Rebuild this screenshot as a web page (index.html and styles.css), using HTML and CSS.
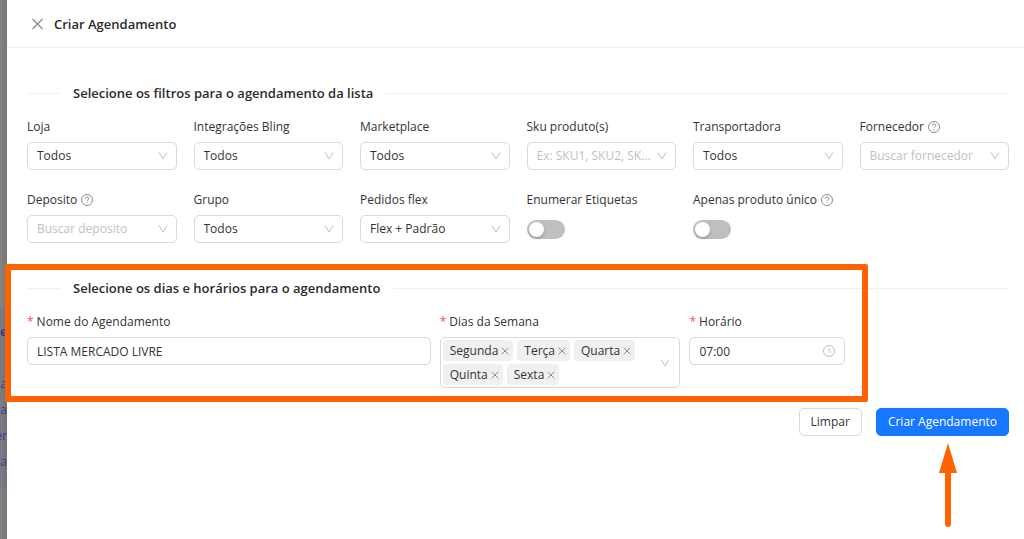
FILE: index.html
```
<!DOCTYPE html>
<html lang="pt-BR">
<head>
    <meta charset="UTF-8">
    <meta name="viewport" content="width=device-width, initial-scale=1.0">
    <title>Criar Agendamento</title>
    <link rel="stylesheet" href="styles.css">
</head>
<body>
    <!-- shared icons -->
    <svg class="sprite" aria-hidden="true">
        <symbol id="arrow" viewBox="0 0 10 10"><path d="M1 1.5 L5 8 L9 1.5" /></symbol>
        <symbol id="cross" viewBox="0 0 12 12"><path d="M1 1 L11 11 M11 1 L1 11" /></symbol>
        <symbol id="help" viewBox="0 0 14 14">
            <circle cx="7" cy="7" r="5.5" />
            <path d="M5.2 5.6 C5.2 3.3 8.8 3.3 8.8 5.6 C8.8 6.9 7 6.8 7 8.3 M7 9.3 V10.3" />
        </symbol>
        <symbol id="clock" viewBox="0 0 14 14"><circle cx="7" cy="7" r="5.5" /><path d="M7 3.8 V7.2 L9.2 8.8" /></symbol>
    </svg>

    <div class="page">
        <div class="mask">
            <div class="mask-menu">
                <b>e</b>
                <span>a</span>
                <span>a</span>
                <span>êr</span>
                <span>ca</span>
            </div>
        </div>

        <div class="drawer">
            <header class="drawer-header">
                <button class="close" type="button" aria-label="Fechar"><svg class="icon"><use href="#cross" /></svg></button>
                <h1 class="title">Criar Agendamento</h1>
            </header>

            <form class="drawer-body">
                <h2 class="divider">Selecione os filtros para o agendamento da lista</h2>
                <div class="filters">
                    <div class="field">
                        <label for="loja">Loja</label>
                        <div class="control">
                            <select id="loja"><option>Todos</option></select>
                            <svg class="icon arrow"><use href="#arrow" /></svg>
                        </div>
                    </div>
                    <div class="field">
                        <label for="bling">Integrações Bling</label>
                        <div class="control">
                            <select id="bling"><option>Todos</option></select>
                            <svg class="icon arrow"><use href="#arrow" /></svg>
                        </div>
                    </div>
                    <div class="field">
                        <label for="marketplace">Marketplace</label>
                        <div class="control">
                            <select id="marketplace"><option>Todos</option></select>
                            <svg class="icon arrow"><use href="#arrow" /></svg>
                        </div>
                    </div>
                    <div class="field">
                        <label for="sku">Sku produto(s)</label>
                        <div class="control">
                            <select id="sku" class="empty"><option>Ex: SKU1, SKU2, SKU3</option></select>
                            <svg class="icon arrow"><use href="#arrow" /></svg>
                        </div>
                    </div>
                    <div class="field">
                        <label for="transportadora">Transportadora</label>
                        <div class="control">
                            <select id="transportadora"><option>Todos</option></select>
                            <svg class="icon arrow"><use href="#arrow" /></svg>
                        </div>
                    </div>
                    <div class="field">
                        <label for="fornecedor">Fornecedor <svg class="icon help"><use href="#help" /></svg></label>
                        <div class="control">
                            <select id="fornecedor" class="empty"><option>Buscar fornecedor</option></select>
                            <svg class="icon arrow"><use href="#arrow" /></svg>
                        </div>
                    </div>
                    <div class="field">
                        <label for="deposito">Deposito <svg class="icon help"><use href="#help" /></svg></label>
                        <div class="control">
                            <select id="deposito" class="empty"><option>Buscar deposito</option></select>
                            <svg class="icon arrow"><use href="#arrow" /></svg>
                        </div>
                    </div>
                    <div class="field">
                        <label for="grupo">Grupo</label>
                        <div class="control">
                            <select id="grupo"><option>Todos</option></select>
                            <svg class="icon arrow"><use href="#arrow" /></svg>
                        </div>
                    </div>
                    <div class="field">
                        <label for="flex">Pedidos flex</label>
                        <div class="control">
                            <select id="flex"><option>Flex + Padrão</option></select>
                            <svg class="icon arrow"><use href="#arrow" /></svg>
                        </div>
                    </div>
                    <div class="field">
                        <label for="enumerar">Enumerar Etiquetas</label>
                        <input id="enumerar" class="switch" type="checkbox" role="switch">
                    </div>
                    <div class="field">
                        <label for="unico">Apenas produto único <svg class="icon help"><use href="#help" /></svg></label>
                        <input id="unico" class="switch" type="checkbox" role="switch">
                    </div>
                </div>

                <section class="schedule">
                    <h2 class="divider">Selecione os dias e horários para o agendamento</h2>
                    <div class="schedule-row">
                        <div class="field">
                            <label class="required" for="nome">Nome do Agendamento</label>
                            <input id="nome" class="text" type="text" value="LISTA MERCADO LIVRE">
                        </div>
                        <div class="field">
                            <label class="required" for="dias">Dias da Semana</label>
                            <div class="control tags">
                                <span class="tag">Segunda<button type="button" aria-label="Remover Segunda"><svg class="icon"><use href="#cross" /></svg></button></span>
                                <span class="tag">Terça<button type="button" aria-label="Remover Terça"><svg class="icon"><use href="#cross" /></svg></button></span>
                                <span class="tag">Quarta<button type="button" aria-label="Remover Quarta"><svg class="icon"><use href="#cross" /></svg></button></span>
                                <span class="tag">Quinta<button type="button" aria-label="Remover Quinta"><svg class="icon"><use href="#cross" /></svg></button></span>
                                <span class="tag">Sexta<button type="button" aria-label="Remover Sexta"><svg class="icon"><use href="#cross" /></svg></button></span>
                                <input id="dias" class="search" type="text">
                                <svg class="icon arrow"><use href="#arrow" /></svg>
                            </div>
                        </div>
                        <div class="field">
                            <label class="required" for="horario">Horário</label>
                            <div class="control">
                                <input id="horario" class="text" type="text" value="07:00">
                                <svg class="icon clock"><use href="#clock" /></svg>
                            </div>
                        </div>
                    </div>
                    <div class="highlight"></div>
                </section>

                <div class="actions">
                    <button class="btn" type="reset">Limpar</button>
                    <div class="submit">
                        <button class="btn primary" type="button">Criar Agendamento</button>
                        <svg class="pointer" viewBox="0 0 18 84">
                            <path d="M9 0 L18 30 H12 V81 A3 3 0 0 1 6 81 V30 H0 Z" />
                        </svg>
                    </div>
                </div>
            </form>
        </div>
    </div>
</body>
</html>
```

FILE: styles.css
```
*{
    box-sizing: border-box;
}
body{
    margin: 0;
    font-family: "Open Sans", "Noto Sans", sans-serif;
    font-size: 12px;
    line-height: 18px;
    color: #333;
}
h1,h2{
    margin: 0;
    font-size: 13px;
    font-weight: 600;
    line-height: 20px;
    color: #2b2b2b;
}
button,input,select{
    font: inherit;
    color: inherit;
}
.sprite{
    display: none;
}
.icon{
    width: 10px;
    height: 10px;
    fill: none;
    stroke: currentColor;
}
.page{
    display: flex;
    min-height: 100vh;
}
.mask{
    width: 7px;
    flex: none;
    overflow: hidden;
    background: linear-gradient(to right, #858585, #757575);
}
.mask-menu{
    display: flex;
    flex-direction: column;
    align-items: flex-end;
    gap: 8px;
    margin-top: 307px;
    padding: 16px 0;
    background: rgba(110, 110, 140, 0.4);
    color: #3c3c85;
}
.mask-menu b{
    margin-bottom: 26px;
}
.drawer{
    flex: 1;
    min-width: 0;
    background: #fff;
}
.drawer-header{
    display: flex;
    align-items: center;
    gap: 10px;
    height: 48px;
    padding: 0 24px;
    border-bottom: 1px solid #f0f0f0;
}
.close{
    display: flex;
    padding: 0;
    border: 0;
    background: none;
    color: #8c8c8c;
    cursor: pointer;
}
.close .icon{
    width: 13px;
    height: 12px;
    stroke-width: 1.3;
}
.drawer-body{
    padding: 35px 15px 20px 20px;
}
.divider{
    display: flex;
    align-items: center;
    gap: 13px;
}
.divider::before,.divider::after{
    content: "";
    height: 1px;
    background: #f0f0f0;
}
.divider::before{
    width: 33px;
}
.divider::after{
    flex: 1;
}
.filters{
    display: grid;
    grid-template-columns: repeat(6, minmax(0, 1fr));
    gap: 21px 17px;
    margin-top: 15px;
}
.field{
    display: flex;
    flex-direction: column;
    align-items: flex-start;
    gap: 6px;
    min-width: 0;
}
label{
    display: flex;
    align-items: center;
    gap: 3px;
    height: 18px;
    white-space: nowrap;
}
.required::before{
    content: "*";
    color: #ff4d4f;
}
.help{
    width: 14px;
    height: 14px;
    color: #8c8c8c;
}
.control{
    display: flex;
    align-items: center;
    position: relative;
    width: 100%;
}
select,.text{
    width: 100%;
    height: 28px;
    padding: 0 22px 0 9px;
    border: 1px solid #d9d9d9;
    border-radius: 5px;
    background: #fff;
    appearance: none;
    text-overflow: ellipsis;
}
.empty{
    color: #bfbfbf;
}
.arrow,.clock{
    position: absolute;
    right: 9px;
    color: #bfbfbf;
    pointer-events: none;
}
.clock{
    width: 14px;
    height: 14px;
}
.switch{
    display: flex;
    align-items: center;
    appearance: none;
    width: 38px;
    height: 19px;
    margin: 5px 0 0;
    padding: 2px;
    border-radius: 10px;
    background: #bfbfbf;
    cursor: pointer;
}
.switch::before{
    content: "";
    width: 15px;
    height: 15px;
    border-radius: 50%;
    background: #fff;
    box-shadow: 0 2px 3px rgba(0, 35, 11, 0.2);
}
.switch:checked{
    justify-content: flex-end;
    background: #1677ff;
}
.schedule{
    position: relative;
    margin-top: 35px;
}
.schedule-row{
    display: grid;
    grid-template-columns: 52fr 31fr 20fr 20fr;
    gap: 9px;
    margin-top: 15px;
}
.tags{
    flex-wrap: wrap;
    gap: 3px 4px;
    padding: 2px 30px 2px 2px;
    border: 1px solid #d9d9d9;
    border-radius: 5px;
}
.tag{
    display: flex;
    align-items: center;
    gap: 3px;
    height: 21px;
    padding: 0 4px 0 7px;
    border-radius: 4px;
    background: #f0f0f0;
}
.tag button{
    display: flex;
    padding: 0;
    border: 0;
    background: none;
    color: #8c8c8c;
}
.tag .icon{
    width: 8px;
    height: 8px;
    stroke-width: 1.5;
}
.search{
    width: 4px;
    padding: 0;
    border: 0;
    outline: 0;
}
.highlight{
    position: absolute;
    top: -14px;
    right: 141px;
    bottom: -14px;
    left: -22px;
    border: 6px solid #ff6200;
    border-radius: 2px;
    pointer-events: none;
}
.actions{
    display: flex;
    justify-content: flex-end;
    gap: 14px;
    margin-top: 20px;
}
.btn{
    height: 28px;
    padding: 0 11px;
    border: 1px solid #d9d9d9;
    border-radius: 5px;
    background: #fff;
    cursor: pointer;
}
.primary{
    border-color: #1677ff;
    background: #1677ff;
    color: #fff;
}
.submit{
    position: relative;
}
.pointer{
    position: absolute;
    top: 35px;
    right: 52px;
    width: 18px;
    height: 84px;
    fill: #ff6200;
}
```
